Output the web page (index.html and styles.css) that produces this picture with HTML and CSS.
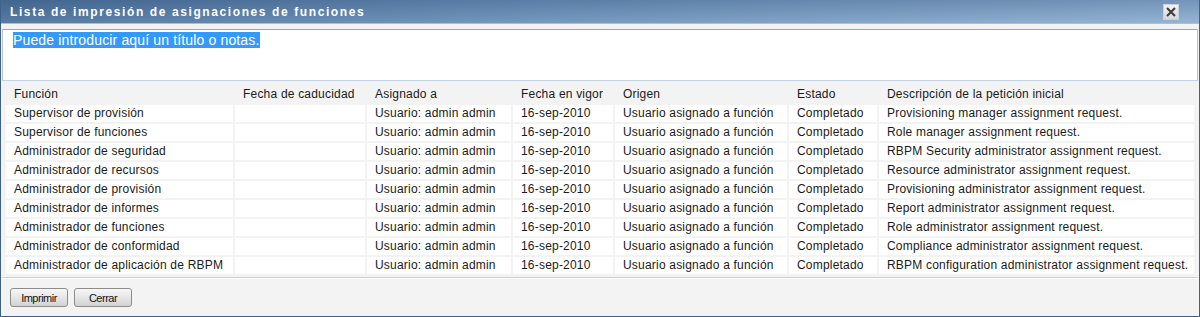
FILE: index.html
```html
<!DOCTYPE html>
<html lang="es">
<head>
<meta charset="utf-8">
<title>Lista de impresión</title>
<link rel="stylesheet" href="styles.css">
</head>
<body>
<div class="dialog">
  <div class="titlebar">
    <span class="title">Lista de impresión de asignaciones de funciones</span>
    <span class="close"><svg width="12" height="12" viewBox="0 0 12 12"><path d="M2 2 L10 10 M10 2 L2 10" stroke="#3a3a3a" stroke-width="2"/></svg></span>
  </div>
  <div class="content">
    <div class="notes"><span class="sel">Puede introducir aquí un título o notas.</span></div>
    <div class="tablewrap">
      <table class="grid">
        <thead>
          <tr><th class="c1">Función</th><th class="c2">Fecha de caducidad</th><th class="c3">Asignado a</th><th class="c4">Fecha en vigor</th><th class="c5">Origen</th><th class="c6">Estado</th><th class="c7">Descripción de la petición inicial</th></tr>
        </thead>
        <tbody>
          <tr><td>Supervisor de provisión</td><td></td><td>Usuario: admin admin</td><td>16-sep-2010</td><td>Usuario asignado a función</td><td>Completado</td><td>Provisioning manager assignment request.</td></tr>
          <tr><td>Supervisor de funciones</td><td></td><td>Usuario: admin admin</td><td>16-sep-2010</td><td>Usuario asignado a función</td><td>Completado</td><td>Role manager assignment request.</td></tr>
          <tr><td>Administrador de seguridad</td><td></td><td>Usuario: admin admin</td><td>16-sep-2010</td><td>Usuario asignado a función</td><td>Completado</td><td>RBPM Security administrator assignment request.</td></tr>
          <tr><td>Administrador de recursos</td><td></td><td>Usuario: admin admin</td><td>16-sep-2010</td><td>Usuario asignado a función</td><td>Completado</td><td>Resource administrator assignment request.</td></tr>
          <tr><td>Administrador de provisión</td><td></td><td>Usuario: admin admin</td><td>16-sep-2010</td><td>Usuario asignado a función</td><td>Completado</td><td>Provisioning administrator assignment request.</td></tr>
          <tr><td>Administrador de informes</td><td></td><td>Usuario: admin admin</td><td>16-sep-2010</td><td>Usuario asignado a función</td><td>Completado</td><td>Report administrator assignment request.</td></tr>
          <tr><td>Administrador de funciones</td><td></td><td>Usuario: admin admin</td><td>16-sep-2010</td><td>Usuario asignado a función</td><td>Completado</td><td>Role administrator assignment request.</td></tr>
          <tr><td>Administrador de conformidad</td><td></td><td>Usuario: admin admin</td><td>16-sep-2010</td><td>Usuario asignado a función</td><td>Completado</td><td>Compliance administrator assignment request.</td></tr>
          <tr><td>Administrador de aplicación de RBPM</td><td></td><td>Usuario: admin admin</td><td>16-sep-2010</td><td>Usuario asignado a función</td><td>Completado</td><td>RBPM configuration administrator assignment request.</td></tr>
        </tbody>
      </table>
    </div>
    <div class="footer">
      <button class="btn">Imprimir</button>
      <button class="btn">Cerrar</button>
    </div>
  </div>
</div>
</body>
</html>
```

FILE: styles.css
```css
html, body {
  margin: 0;
  padding: 0;
  background: #ffffff;
}
body {
  font-family: "Liberation Sans", Arial, sans-serif;
  font-size: 12px;
  color: #1a1a1a;
}
.dialog {
  width: 1200px;
  height: 317px;
  box-sizing: border-box;
  border: 1px solid #3d6189;
  border-top: none;
  display: flex;
  flex-direction: column;
  background: #f2f2f2;
}
.titlebar {
  height: 23px;
  flex: none;
  display: flex;
  align-items: center;
  justify-content: space-between;
  padding: 0 20px 0 9px;
  background: linear-gradient(to bottom, rgba(40,70,110,0.25), rgba(255,255,255,0.08)), linear-gradient(to right, #4a7099 0%, #6a90b9 45%, #8dafd0 100%);
  border-bottom: 1px solid #a9bfd6;
}
.title {
  color: #ffffff;
  font-weight: bold;
  font-size: 12px;
  letter-spacing: 1.6px;
}
.close {
  width: 16px;
  height: 16px;
  display: flex;
  align-items: center;
  justify-content: center;
  background: linear-gradient(#f2f2f2, #d8d8d8);
  border: 1px solid #c8d2dc;
  box-sizing: border-box;
}
.content {
  flex: 1;
  display: flex;
  flex-direction: column;
  padding: 5px 1px 0 1px;
  background: #f3f3f3;
}
.notes {
  height: 52px;
  box-sizing: border-box;
  flex: none;
  background: #ffffff;
  border: 1px solid #b9c3cc;
  border-top-color: #a4a4a4;
  border-bottom-color: #c4d4e4;
  padding: 2px 10px;
  font-size: 14px;
  line-height: 17px;
  letter-spacing: 0.15px;
}
.sel {
  background: #3399ff;
  color: #ffffff;
}
.tablewrap {
  flex: none;
  padding: 3px 2px 0 2px;
  border-bottom: 1px solid #cfcfcf;
  height: 197px;
  box-sizing: border-box;
}
.grid {
  border-collapse: separate;
  border-spacing: 2px 2px;
  width: 100%;
  table-layout: fixed;
  letter-spacing: 0.2px;
}
.grid th, .grid td {
  height: 17px;
  padding: 0 0 0 8px;
  text-align: left;
  font-weight: normal;
  white-space: nowrap;
  overflow: hidden;
  line-height: 17px;
}
.grid th {
  background: transparent;
}
.grid td {
  background: #ffffff;
}
.c1 { width: 219px; }
.c2 { width: 122px; }
.c3 { width: 136px; }
.c4 { width: 92px; }
.c5 { width: 164px; }
.c6 { width: 80px; }
.footer {
  flex: 1;
  display: flex;
  align-items: flex-start;
  gap: 6px;
  padding: 9px 8px 0 8px;
  border-top: 1px solid #ffffff;
}
.btn {
  height: 19px;
  padding: 0;
  width: 58px;
  font-family: "Liberation Sans", Arial, sans-serif;
  font-size: 11px;
  letter-spacing: -0.5px;
  color: #111;
  border: 1px solid #8c8c8c;
  border-radius: 3px;
  background: linear-gradient(#f7f7f7 0%, #e6e6e6 50%, #d2d2d2 100%);
}
```
